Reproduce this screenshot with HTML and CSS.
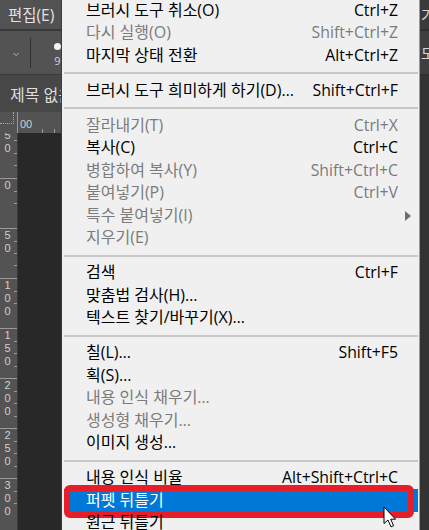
FILE: index.html
```html
<!DOCTYPE html>
<html lang="ko">
<head>
<meta charset="utf-8">
<title>편집 메뉴</title>
<link rel="stylesheet" href="styles.css">
</head>
<body>
<div class="screen">
  <div class="ps">
    <div class="ps-menubar"><span>편집(E)</span></div>
    <div class="ps-options">
      <svg class="chev" width="7" height="5" viewBox="0 0 7 5"><path d="M0.5 0.8 L3.5 3.8 L6.5 0.8" fill="none" stroke="#c4c4c4" stroke-width="1"/></svg>
      <span class="vsep"></span>
      <span class="brush"><span class="dot"></span><span class="num">9</span></span>
    </div>
    <div class="ps-tab"><span>제목 없음</span></div>
    <div class="ps-rulerrow">
      <div class="corner"><div class="origin"></div></div>
      <div class="hruler"><span class="hlabel">00</span></div>
    </div>
    <div class="ps-work">
      <div class="vruler">
        <div class="vtrack">
          <div class="seg"><span>5</span><span>0</span></div>
          <div class="seg"><span>0</span></div>
          <div class="seg"><span>5</span><span>0</span></div>
          <div class="seg"><span>1</span><span>0</span><span>0</span></div>
          <div class="seg"><span>1</span><span>5</span><span>0</span></div>
          <div class="seg"><span>2</span><span>0</span><span>0</span></div>
          <div class="seg"><span>2</span><span>5</span><span>0</span></div>
          <div class="seg"><span>3</span><span>0</span><span>0</span></div>
        </div>
      </div>
      <div class="canvas"></div>
    </div>
  </div>

  <div class="menu">
    <div class="item"><span class="label">브러시 도구 취소(O)</span><span class="key">Ctrl+Z</span><span></span></div>
    <div class="item off"><span class="label">다시 실행(O)</span><span class="key">Shift+Ctrl+Z</span><span></span></div>
    <div class="item"><span class="label">마지막 상태 전환</span><span class="key">Alt+Ctrl+Z</span><span></span></div>
    <div class="sep"></div>
    <div class="item"><span class="label">브러시 도구 희미하게 하기(D)…</span><span class="key">Shift+Ctrl+F</span><span></span></div>
    <div class="sep"></div>
    <div class="item off"><span class="label">잘라내기(T)</span><span class="key">Ctrl+X</span><span></span></div>
    <div class="item"><span class="label">복사(C)</span><span class="key">Ctrl+C</span><span></span></div>
    <div class="item off"><span class="label">병합하여 복사(Y)</span><span class="key">Shift+Ctrl+C</span><span></span></div>
    <div class="item off"><span class="label">붙여넣기(P)</span><span class="key">Ctrl+V</span><span></span></div>
    <div class="item off"><span class="label">특수 붙여넣기(I)</span><span class="key"></span><span class="sub-arrow"></span></div>
    <div class="item off"><span class="label">지우기(E)</span><span class="key"></span><span></span></div>
    <div class="sep"></div>
    <div class="item"><span class="label">검색</span><span class="key">Ctrl+F</span><span></span></div>
    <div class="item"><span class="label">맞춤법 검사(H)…</span><span class="key"></span><span></span></div>
    <div class="item"><span class="label">텍스트 찾기/바꾸기(X)…</span><span class="key"></span><span></span></div>
    <div class="sep"></div>
    <div class="item"><span class="label">칠(L)…</span><span class="key">Shift+F5</span><span></span></div>
    <div class="item"><span class="label">획(S)…</span><span class="key"></span><span></span></div>
    <div class="item off"><span class="label">내용 인식 채우기…</span><span class="key"></span><span></span></div>
    <div class="item off"><span class="label">생성형 채우기…</span><span class="key"></span><span></span></div>
    <div class="item"><span class="label">이미지 생성…</span><span class="key"></span><span></span></div>
    <div class="sep"></div>
    <div class="item"><span class="label">내용 인식 비율</span><span class="key">Alt+Shift+Ctrl+C</span><span></span></div>
    <div class="item hot"><span class="label">퍼펫 뒤틀기</span><span class="key"></span><span></span><span class="mark"></span></div>
    <div class="item"><span class="label">원근 뒤틀기</span><span class="key"></span><span></span></div>
  </div>

  <div class="strip">
    <div class="strip-bar">기</div>
    <div class="strip-opt">모</div>
    <div class="strip-rest"></div>
  </div>

  <svg class="cursor" width="14" height="22" viewBox="0 0 14 22"><path d="M1 1 L1 17.5 L5 14 L8 20.8 L10.6 19.7 L7.7 13.2 L12.6 13.2 Z" fill="#ffffff" stroke="#000000" stroke-width="1" stroke-linejoin="miter"/></svg>
</div>
</body>
</html>
```

FILE: styles.css
```css
html, body {
  margin: 0;
  padding: 0;
}

body {
  width: 429px;
  height: 530px;
  overflow: hidden;
  background: #282828;
}

.screen {
  position: relative;
  display: flex;
  width: 429px;
  height: 530px;
  overflow: hidden;
  font-family: "Open Sans", "Noto Sans CJK KR", sans-serif;
}

/* ---------- Photoshop workspace (left) ---------- */
.ps {
  width: 61px;
  flex: none;
  display: flex;
  flex-direction: column;
  overflow: hidden;
}

.ps-menubar {
  height: 29px;
  flex: none;
  border-bottom: 2px solid #393939;
  background: #525252;
  color: #e2e2e2;
  font-size: 15.5px;
  display: flex;
  align-items: center;
  padding-left: 8px;
  white-space: nowrap;
}

.ps-options {
  height: 43px;
  flex: none;
  border-bottom: 1px solid #393939;
  background: #535353;
  display: flex;
  align-items: center;
  padding-left: 13px;
}

.chev {
  display: block;
  margin-top: 4px;
}

.vsep {
  width: 1px;
  height: 30px;
  background: #2e2e2e;
  margin-left: 11px;
}

.brush {
  display: flex;
  flex-direction: column;
  align-items: center;
  align-self: flex-start;
  margin-top: 12px;
  margin-left: 23px;
}

.dot {
  width: 7px;
  height: 7px;
  border-radius: 50%;
  background: #f4f4f4;
}

.num {
  font-size: 11px;
  line-height: 12px;
  margin-top: 5px;
  color: #c6d3e8;
}

.ps-tab {
  height: 37px;
  flex: none;
  background: #474747;
  color: #dedede;
  font-size: 16px;
  display: flex;
  align-items: center;
  padding-left: 10px;
  white-space: nowrap;
}

.ps-rulerrow {
  height: 21px;
  flex: none;
  display: flex;
  background: #535353;
}

.corner {
  width: 17px;
  flex: none;
}

.origin {
  width: 14px;
  height: 12px;
  border-right: 1px dotted #a8a8a8;
  border-bottom: 1px dotted #a8a8a8;
  box-sizing: border-box;
}

.hruler {
  flex: 1;
  border-left: 1px solid #9a9a9a;
  padding-left: 2px;
  color: #cfcfcf;
  font-family: "Liberation Sans", sans-serif;
  font-size: 11px;
  background: repeating-linear-gradient(to right, transparent 0 11.5px, #9a9a9a 11.5px 12.5px) left bottom / 100% 4px no-repeat;
}

.hlabel {
  display: block;
  padding-top: 6px;
  line-height: 13px;
}

.ps-work {
  flex: 1;
  display: flex;
  min-height: 0;
}

.vruler {
  width: 17px;
  flex: none;
  background: #535353;
  border-right: 1px solid #3a3a3a;
  overflow: hidden;
  color: #cfcfcf;
  font-family: "Liberation Sans", sans-serif;
  font-size: 11px;
}

.vtrack {
  margin-top: -5px;
}

.seg {
  height: 50px;
  box-sizing: border-box;
  border-top: 1px solid #9a9a9a;
  display: flex;
  flex-direction: column;
  align-items: center;
  padding-right: 2px;
  line-height: 13px;
  background: repeating-linear-gradient(to bottom, transparent 0 11.5px, #9a9a9a 11.5px 12.5px) right top / 3px 100% no-repeat;
}

.canvas {
  flex: 1;
  background: #282828;
}

/* ---------- Edit menu ---------- */
.menu {
  width: 357px;
  flex: none;
  align-self: flex-start;
  margin-top: -0.75px;
  border-left: 1px solid #3c3c3c;
  border-right: 1px solid #9c9c9c;
  background: #f0f0f0;
  display: flex;
  flex-direction: column;
  padding-bottom: 4px;
}

.item {
  position: relative;
  box-sizing: border-box;
  display: grid;
  grid-template-columns: 1fr auto 20px;
  align-items: center;
  height: 22.5px;
  flex: none;
  margin: 0 1px 0 2px;
  padding-left: 22px;
  padding-bottom: 2px;
  font-size: 16px;
  color: #000000;
  white-space: nowrap;
}

.label {
  line-height: 20px;
}

.item.off {
  color: #7b7b7b;
}

.key {
  font-size: 15.8px;
  line-height: 20px;
  text-align: right;
}

.item.hot {
  background: #0078d7;
  color: #ffffff;
}

.sub-arrow {
  width: 0;
  height: 0;
  margin-left: 7px;
  margin-top: 2px;
  border-left: 6px solid #6f6f6f;
  border-top: 5px solid transparent;
  border-bottom: 5px solid transparent;
}

.sep {
  height: 2px;
  flex: none;
  margin: 5.25px 1px 5.25px 2px;
  background: #c7c7c7;
}

.mark {
  position: absolute;
  left: 0;
  top: -4.25px;
  right: 4px;
  bottom: -5.75px;
  border: 6px solid #e61e28;
  border-radius: 6px;
}

/* ---------- strip right of the menu ---------- */
.strip {
  flex: 1;
  min-width: 0;
  display: flex;
  flex-direction: column;
  background: #3a3a3a;
  color: #d6d6d6;
  font-size: 15px;
  white-space: nowrap;
  overflow: hidden;
}

.strip-bar {
  height: 29px;
  flex: none;
  border-bottom: 2px solid #2e2e2e;
  display: flex;
  align-items: center;
  padding-left: 1px;
}

.strip-opt {
  height: 43px;
  flex: none;
  border-bottom: 1px solid #2e2e2e;
  background: #3f3f3f;
  display: flex;
  align-items: center;
  padding-left: 1px;
}

.strip-rest {
  flex: 1;
  background: #333333;
}

.cursor {
  position: absolute;
  left: 383px;
  top: 506px;
}
```
